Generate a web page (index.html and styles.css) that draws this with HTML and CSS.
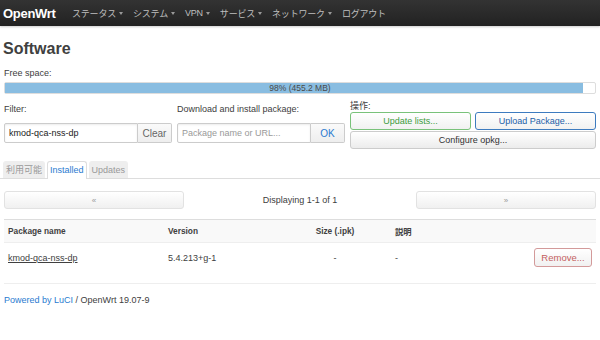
FILE: index.html
```html
<!DOCTYPE html>
<html>
<head>
<meta charset="utf-8">
<link rel="stylesheet" href="styles.css">
</head>
<body>
<header class="topbar">
  <span class="brand">OpenWrt</span>
  <nav class="nav">
    <span class="nav-item">ステータス<i class="caret"></i></span>
    <span class="nav-item">システム<i class="caret"></i></span>
    <span class="nav-item">VPN<i class="caret"></i></span>
    <span class="nav-item">サービス<i class="caret"></i></span>
    <span class="nav-item">ネットワーク<i class="caret"></i></span>
    <span class="nav-item">ログアウト</span>
  </nav>
</header>
<main class="main">
  <h2 class="title">Software</h2>
  <div class="label">Free space:</div>
  <div class="progress"><div class="progress-fill" style="width:98%"></div><span class="progress-text">98% (455.2 MB)</span></div>
  <div class="controls">
    <div class="ctl ctl-filter">
      <div class="label ctl-label">Filter:</div>
      <div class="group">
        <input class="input" value="kmod-qca-nss-dp">
        <button class="btn btn-addon">Clear</button>
      </div>
    </div>
    <div class="ctl ctl-dl">
      <div class="label ctl-label">Download and install package:</div>
      <div class="group">
        <input class="input" placeholder="Package name or URL...">
        <button class="btn btn-addon btn-ok">OK</button>
      </div>
    </div>
    <div class="ctl ctl-actions">
      <div class="label act-label">操作:</div>
      <div class="act-row">
        <button class="btn btn-green">Update lists...</button>
        <button class="btn btn-blue">Upload Package...</button>
      </div>
      <button class="btn btn-wide">Configure opkg...</button>
    </div>
  </div>
  <ul class="tabs">
    <li class="tab">利用可能</li>
    <li class="tab active">Installed</li>
    <li class="tab">Updates</li>
  </ul>
  <div class="pager">
    <button class="btn btn-pager">«</button>
    <span class="pager-text">Displaying 1-1 of 1</span>
    <button class="btn btn-pager">»</button>
  </div>
  <table class="table">
    <thead>
      <tr><th class="c-name">Package name</th><th class="c-ver">Version</th><th class="c-size">Size (.ipk)</th><th class="c-desc">説明</th><th class="c-act"></th></tr>
    </thead>
    <tbody>
      <tr><td class="c-name"><a class="pkg">kmod-qca-nss-dp</a></td><td class="c-ver">5.4.213+g-1</td><td class="c-size">-</td><td class="c-desc">-</td><td class="c-act"><button class="btn btn-remove">Remove...</button></td></tr>
    </tbody>
  </table>
  <footer class="footer"><a class="link">Powered by LuCI</a> / OpenWrt 19.07-9</footer>
</main>
</body>
</html>
```
FILE: styles.css
```css
* { box-sizing: border-box; }
body {
  margin: 0;
  font-family: "Liberation Sans", Arial, "Noto Sans CJK JP", sans-serif;
  font-size: 9px;
  color: #404040;
  background: #fff;
}
.topbar {
  height: 26px;
  background: linear-gradient(#333, #222);
  display: flex;
  align-items: center;
  padding-left: 3px;
  box-shadow: 0 1px 2px rgba(0,0,0,0.2);
}
.brand {
  color: #fff;
  font-size: 13px;
  font-weight: bold;
  letter-spacing: -0.3px;
  width: 69px;
}
.nav { display: flex; gap: 10px; }
.nav-item {
  color: #bfbfbf;
  font-size: 9px;
  letter-spacing: -0.2px;
  display: flex;
  align-items: center;
}
.caret {
  display: inline-block;
  margin-left: 3px;
  border-left: 2.5px solid transparent;
  border-right: 2.5px solid transparent;
  border-top: 3px solid #999;
}
.main { padding: 0 4px; }
.title {
  margin: 14px 0 0 -1px;
  font-size: 16px;
  font-weight: bold;
  line-height: 18px;
  color: #404040;
}
.label { color: #404040; font-size: 9px; }
.main > .label { margin-top: 10px; line-height: 11px; }
.progress {
  position: relative;
  margin-top: 3px;
  height: 12px;
  border: 1px solid #ddd;
  border-radius: 2px;
  background: #fff;
}
.progress-fill { height: 100%; background: #89bde1; }
.progress-text {
  position: absolute;
  left: 0; right: 0; top: 0;
  text-align: center;
  line-height: 10px;
  color: #4a4a4a;
  font-size: 8.5px;
}
.controls {
  display: flex;
  margin-top: 10px;
}
.ctl-filter { width: 173px; }
.ctl-dl { width: 173px; }
.ctl-actions { flex: 1; }
.ctl-label { line-height: 11px; height: 19px; }
.act-label { line-height: 11px; margin-top: -3px; height: 11px; }
.group { display: flex; width: 168px; }
.input {
  width: 134px;
  height: 20px;
  border: 1px solid #ccc;
  border-radius: 2px 0 0 2px;
  font: inherit;
  font-size: 9px;
  padding: 0 4px;
  color: #222;
  box-shadow: inset 0 1px 2px rgba(0,0,0,0.08);
}
.input::placeholder { color: #999; }
.btn {
  font: inherit;
  font-size: 9px;
  border: 1px solid #ccc;
  border-radius: 3px;
  background: linear-gradient(#fff, #e9e9e9);
  color: #333;
  padding: 0;
  cursor: pointer;
}
.btn-addon {
  flex: 1;
  height: 20px;
  border-left: none;
  border-radius: 0 2px 2px 0;
  color: #666;
  font-size: 10px;
  background: linear-gradient(#fafafa, #eee);
}
.btn-ok { color: #2a7bd0; }
.act-row { display: flex; gap: 4px; margin-bottom: 1px; }
.btn-green, .btn-blue { flex: 1; height: 18px; }
.btn-green { border-color: #79c27a; color: #3d9b3e; background: linear-gradient(#fff, #f1f1f1); }
.btn-blue { border-color: #3d7bbf; color: #1b5ea8; background: linear-gradient(#fff, #f1f1f1); }
.btn-wide { width: 100%; height: 18px; color: #333; background: linear-gradient(#fff, #ececec); }
.tabs {
  list-style: none;
  margin: 12px -4px 0;
  padding: 0 3px;
  display: flex;
  gap: 2px;
  border-bottom: 1px solid #ddd;
  height: 18px;
}
.tab {
  height: 17px;
  line-height: 17px;
  padding: 0 2px;
  background: #eee;
  color: #999;
  border: 1px solid #eee;
  border-bottom: none;
  border-radius: 3px 3px 0 0;
}
.tab.active {
  background: #fff;
  color: #2a7bd0;
  border-color: #ddd;
  height: 18px;
}
.pager {
  display: flex;
  align-items: center;
  margin-top: 12px;
  padding-bottom: 10px;
  border-bottom: 1px solid #ddd;
}
.btn-pager {
  width: 180px;
  height: 18px;
  color: #999;
  font-size: 8px;
  border-color: #e2e2e2;
  background: linear-gradient(#fff, #f0f0f0);
}
.pager-text { flex: 1; text-align: center; color: #404040; font-size: 9px; }
.table {
  width: 100%;
  border-collapse: collapse;
  margin-top: 0;
}
.table th {
  background: #f9f9f9;
  height: 22px;
  text-align: left;
  font-weight: bold;
  font-size: 8.3px;
  color: #404040;
  padding: 0 4px;
  border-bottom: 1px solid #eee;
}
.table td {
  height: 41px;
  padding: 0 4px 10px;
  border-bottom: 1px solid #eee;
  color: #404040;
}
.c-name { width: 160px; }
.c-ver { width: 130px; }
.table .c-size { width: 82px; text-align: center; }
.table .c-desc { width: 80px; padding-left: 19px; }
.c-act { text-align: right; }
.pkg { color: #404040; text-decoration: underline; }
.btn-remove {
  width: 58px;
  height: 19px;
  border-color: #d39a9a;
  color: #c46060;
  font-size: 9.5px;
  background: linear-gradient(#fff, #f1f1f1);
}
.footer { margin-top: 11px; color: #404040; }
.link { color: #2a7bd0; }
```
